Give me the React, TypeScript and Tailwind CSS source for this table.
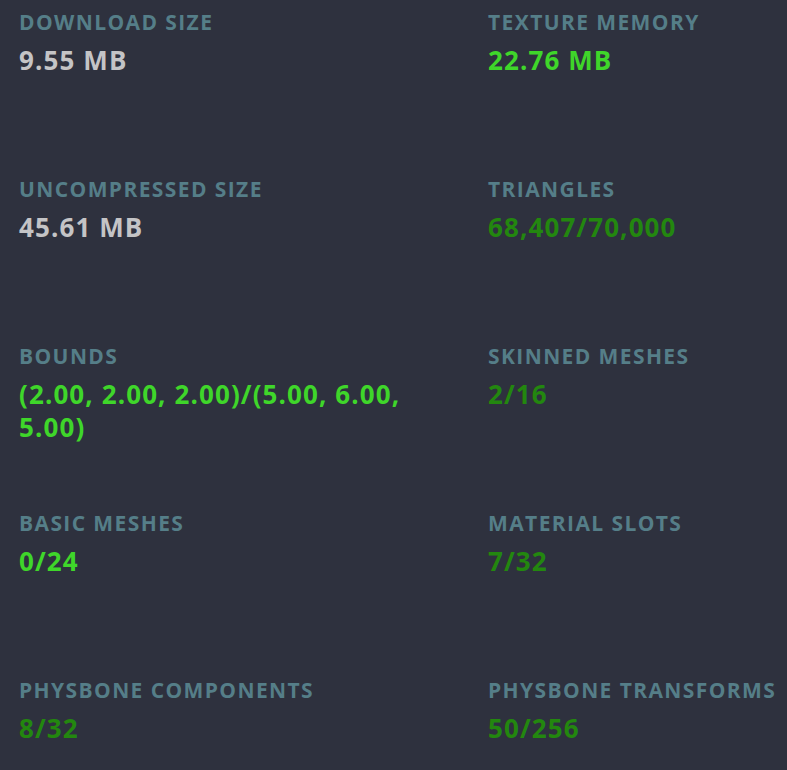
const stats: { label: string; value: string; tone: "plain" | "good" | "ok" }[] = [
  { label: "Download Size", value: "9.55 MB", tone: "plain" },
  { label: "Texture Memory", value: "22.76 MB", tone: "good" },
  { label: "Uncompressed Size", value: "45.61 MB", tone: "plain" },
  { label: "Triangles", value: "68,407/70,000", tone: "ok" },
  { label: "Bounds", value: "(2.00, 2.00, 2.00)/(5.00, 6.00, 5.00)", tone: "good" },
  { label: "Skinned Meshes", value: "2/16", tone: "ok" },
  { label: "Basic Meshes", value: "0/24", tone: "good" },
  { label: "Material Slots", value: "7/32", tone: "ok" },
  { label: "PhysBone Components", value: "8/32", tone: "ok" },
  { label: "PhysBone Transforms", value: "50/256", tone: "ok" },
];

const toneClass = {
  plain: "text-[#c4c4c6]",
  good: "text-[#3fd62a]",
  ok: "text-[#23870f]",
};

export default function App() {
  return (
    <div
      className="h-[770px] w-[787px] overflow-hidden bg-[#2e313e]"
      style={{ fontFamily: '"Open Sans", "Noto Sans", sans-serif' }}
    >
      <div className="grid grid-cols-[469px_1fr]">
        {stats.map((s) => (
          <div key={s.label} className="h-[167px] pl-[19px] pr-[19px] pt-[8px]">
            <div className="text-[21px] leading-[28px] font-bold uppercase tracking-[1.4px] whitespace-nowrap text-[#557e88]">
              {s.label}
            </div>
            <div className={`mt-[8px] text-[26px] leading-[33px] font-bold tracking-[1.1px] ${toneClass[s.tone]}`}>
              {s.value}
            </div>
          </div>
        ))}
      </div>
    </div>
  );
}
